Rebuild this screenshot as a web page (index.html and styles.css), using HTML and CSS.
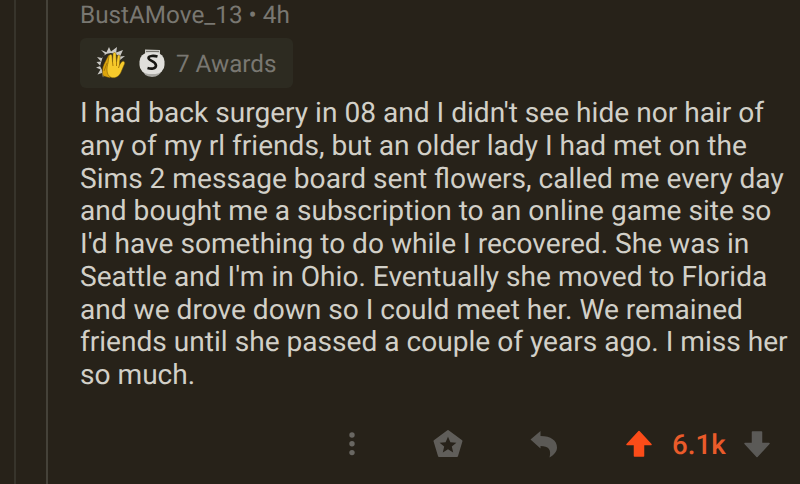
FILE: index.html
```
<!DOCTYPE html>
<html lang="en">
<head>
<meta charset="utf-8">
<title>Comment</title>
<link rel="stylesheet" href="styles.css">
</head>
<body>
<div class="thread">
  <div class="rails"><i class="rail"></i><i class="rail rail-near"></i></div>
  <article class="comment">
    <header class="meta">BustAMove_13 • 4h</header>
    <div class="awards">
      <svg class="clap" width="32" height="34" viewBox="0 0 32 34">
        <path d="M10 8 6 4l5.500 2.200L14 1l2 4.500L22 1l-.8 5.500L28 4l-3 6.500 5-.5-5 4-15 12-2 5.500-1-4.500-4.500 1.500 3-5-4.500-2 4.500-1.500-4-4 4.500-.5-4-4.500 5 1z" fill="#c9c8c4"/>
        <path d="M8 10q8-6 16 0l-2 15-12 5-5-10z" fill="#2a271f"/>
        <path d="M8 30c-1-4-1-8 1-12l4-8c1-2 3-1 3 1l1 16-2 5z" fill="#dca40d" stroke="#443408" stroke-width=".5"/>
        <path d="M14 30c-3-4-2-9-1-13l1-7c.5-2 3-2 3 0l.5 6 .5-8c0-2 3-2 3 0l.5 8 1-6c.5-2 3-1 2.500 1l-.5 8 2-3c2-2 4 0 3 2l-3 7c-2 6-8 9-12.500 5z" fill="#f6ca2b" stroke="#6d5209" stroke-width=".5"/>
        <path d="m17.500 16 .5 4m3.500-4v4m3-1-1 3M9 25l3-8" stroke="#a87908" fill="none"/>
      </svg>
      <svg class="coin" width="28" height="30" viewBox="0 0 28 30">
        <path d="M7 1.500 22 2v4l-15 .5z" fill="#c8c7c2"/>
        <path d="M8 3.500h13" stroke="#77756e"/>
        <path d="M4 20q1 8.500 10 9 8-.5 10-7z" fill="#aaa9a4"/>
        <rect x="1.500" y="4.500" width="25" height="21.500" rx="9" fill="#e0dfdb"/>
        <path d="M19.500 8.500c-3.500-1-9-1-9 1.500 0 3 7.500 3 7.500 7.500 0 3.500-5 3.500-8.500 2.500" fill="none" stroke="#171612" stroke-width="2.600"/>
      </svg>
      <span class="count">7 Awards</span>
    </div>
    <p class="body">I had back surgery in 08 and I didn't see hide nor hair of<br>any of my rl friends, but an older lady I had met on the<br>Sims 2 message board sent flowers, called me every day<br>and bought me a subscription to an online game site so<br>I'd have something to do while I recovered. She was in<br>Seattle and I'm in Ohio. Eventually she moved to Florida<br>and we drove down so I could meet her. We remained<br>friends until she passed a couple of years ago. I miss her<br>so much.</p>
    <footer class="actions">
      <svg class="more" width="8" height="26" viewBox="0 0 8 26" fill="#696762"><circle cx="4" cy="4" r="2.700"/><circle cx="4" cy="12.800" r="2.700"/><circle cx="4" cy="21.600" r="2.700"/></svg>
      <svg class="award" width="30" height="30" viewBox="0 0 30 30">
        <path d="M15 2 28.500 12 24 27H6L1.500 12z" fill="#605e5a" stroke="#605e5a" stroke-width="2" stroke-linejoin="round"/>
        <path d="m15 7.800 2.400 5.400 6 .5-4.600 3.900 1.400 5.900-5.200-3.200-5.200 3.200 1.400-5.900-4.600-3.900 6-.5z" fill="#27221a"/>
      </svg>
      <svg class="reply" width="28" height="28" viewBox="0 0 28 28"><path d="M.5 9.500 10.500 1v5C21 6 27 10.500 27 17.500c0 4-3 7.500-7.500 10 2-8-1-11.500-9-11.500v2.500z" fill="#5b5955"/></svg>
      <svg class="up" width="26" height="28" viewBox="0 0 26 28"><path d="M13 1.500 25 14.500H17.500V26h-9V14.500H1z" fill="#fb4c19" stroke="#fb4c19" stroke-width="1.500" stroke-linejoin="round"/></svg>
      <span class="score">6.1k</span>
      <svg class="down" width="26" height="28" viewBox="0 0 26 28"><path d="M13 26.500 25 13.500H17.500V2h-9V13.500H1z" fill="#5b5a57" stroke="#5b5a57" stroke-width="1.500" stroke-linejoin="round"/></svg>
    </footer>
  </article>
</div>
</body>
</html>
```
FILE: styles.css
```
* { box-sizing: border-box; }
body { margin: 0; background: #272219; font-family: Roboto, sans-serif; text-rendering: geometricPrecision; }
.thread { display: flex; width: 800px; height: 484px; overflow: hidden; }
.rails { display: flex; gap: 30px; width: 80px; padding-left: 14px; flex: none; }
.rail { width: 2px; background: #37342b; }
.rail-near { background: #454239; }
.comment { flex: none; width: 720px; }
.meta { height: 38px; padding-top: 1px; line-height: 28px; font-size: 24.3px; color: #797771; white-space: nowrap; }
.awards { display: flex; align-items: center; width: 213px; height: 50px; padding-left: 15px; border-radius: 6px; background: #2d2b21; white-space: nowrap; }
.coin { margin-left: 11px; }
.count { margin-left: 10px; padding-top: 2px; font-size: 24.2px; line-height: 28px; color: #797771; }
.body { margin: 9px 0 0; font-size: 28.1px; line-height: 32.77px; color: #d2d0c8; white-space: nowrap; }
.actions { display: flex; align-items: center; height: 60px; margin-top: 22px; }
.more { margin-left: 268px; }
.award { margin-left: 77px; }
.reply { margin-left: 67px; }
.up { margin-left: 68px; }
.score { margin-left: 20px; width: 54px; padding-top: 2px; font-size: 27.7px; font-weight: 500; color: #ea5b2a; white-space: nowrap; }
.down { margin-left: 18px; }
```
